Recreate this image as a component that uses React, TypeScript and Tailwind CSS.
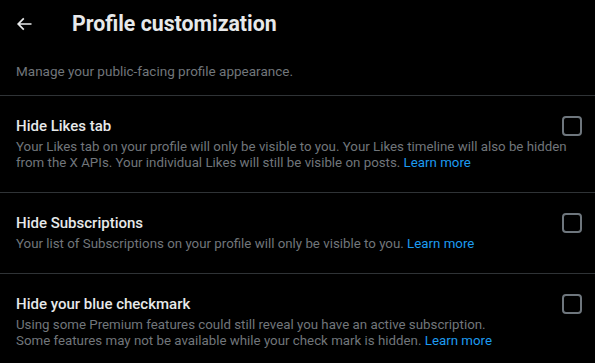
import React from 'react';

const font = { fontFamily: 'Roboto, "Liberation Sans", sans-serif' };

function BackArrow() {
  return (
    <svg viewBox="0 0 24 24" className="w-5 h-5 fill-[#e7e9ea]">
      <path d="M7.414 13l5.043 5.04-1.414 1.42L3.586 12l7.457-7.46 1.414 1.42L7.414 11H21v2H7.414z" />
    </svg>
  );
}

function Checkbox() {
  return <div className="w-5 h-5 shrink-0 rounded-[4px] border-2 border-[#6e767d]" />;
}

function Learn() {
  return <span className="text-[#1d9bf0]">Learn more</span>;
}

function Option({ title, lines }: { title: string; lines: React.ReactNode[] }) {
  return (
    <div className="border-b border-[#2f3336] pl-4 pr-[13px] pt-5 pb-[21px]">
      <div className="flex items-start justify-between">
        <div className="text-[15px] leading-5 font-medium text-[#e7e9ea]">{title}</div>
        <Checkbox />
      </div>
      <div className="mt-[3px] text-[13.3px] leading-4 text-[#71767b]">
        {lines.map((l, i) => (
          <div key={i} className="whitespace-nowrap">
            {l}
          </div>
        ))}
      </div>
    </div>
  );
}

export default function App() {
  return (
    <div className="w-[595px] h-[363px] bg-black overflow-hidden" style={font}>
      <div className="h-[48px] flex items-center pl-[14px]">
        <BackArrow />
        <h1 className="ml-[38px] text-[21.3px] leading-6 font-bold text-[#e7e9ea]">Profile customization</h1>
      </div>
      <div className="px-4 pt-[13px] pb-[14px] border-b border-[#2f3336] text-[13.5px] leading-5 text-[#71767b]">
        Manage your public-facing profile appearance.
      </div>
      <Option
        title="Hide Likes tab"
        lines={[
          'Your Likes tab on your profile will only be visible to you. Your Likes timeline will also be hidden',
          <>
            from the X APIs. Your individual Likes will still be visible on posts. <Learn />
          </>,
        ]}
      />
      <Option
        title="Hide Subscriptions"
        lines={[
          <>
            Your list of Subscriptions on your profile will only be visible to you. <Learn />
          </>,
        ]}
      />
      <Option
        title="Hide your blue checkmark"
        lines={[
          'Using some Premium features could still reveal you have an active subscription.',
          <>
            Some features may not be available while your check mark is hidden. <Learn />
          </>,
        ]}
      />
    </div>
  );
}
